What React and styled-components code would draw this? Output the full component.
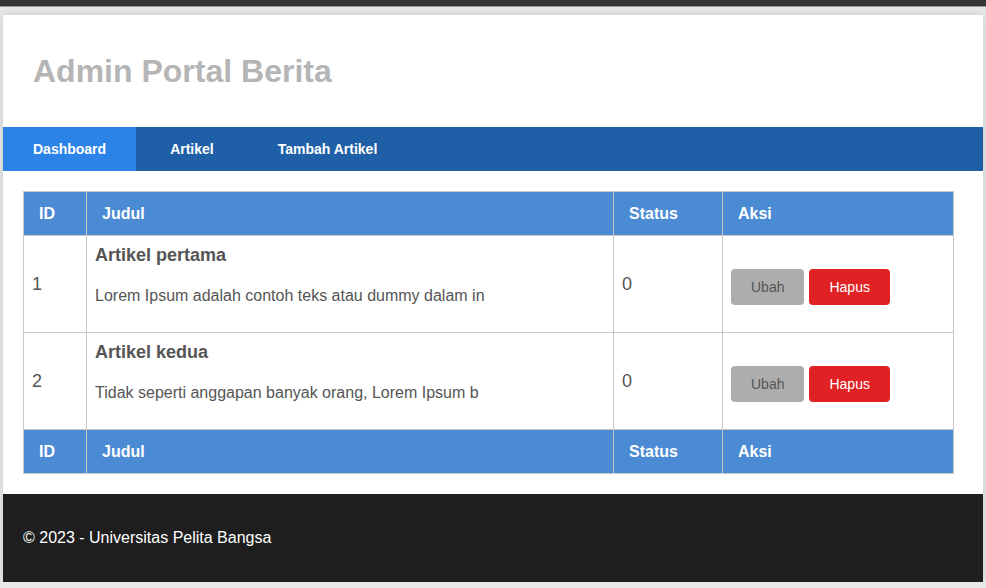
import React from "react";
import styled, { createGlobalStyle } from "styled-components";

const Global = createGlobalStyle`
  html, body { margin: 0; padding: 0; }
  body {
    background: #e9e9e9;
    font-family: "Liberation Sans", Arial, sans-serif;
    color: #555;
  }
`;

const TopBar = styled.div`
  height: 6px;
  background: #363636;
  border-bottom: 1px solid #9a9a9a;
`;

const Container = styled.div`
  width: 980px;
  margin: 8px auto 0;
  background: #fff;
  box-shadow: 0 0 10px rgba(0, 0, 0, 0.15);
`;

const Header = styled.header`
  height: 112px;
  display: flex;
  align-items: center;
  padding: 0 30px;
`;

const Title = styled.h1`
  margin: 0;
  font-size: 32px;
  font-weight: bold;
  color: #b5b5b5;
`;

const Nav = styled.nav`
  display: flex;
  gap: 4px;
  height: 44px;
  background: #1f5fa7;
`;

const NavLink = styled.a`
  display: flex;
  align-items: center;
  padding: 0 30px;
  font-size: 14px;
  font-weight: bold;
  color: #fff;
  text-decoration: none;
  background: ${(p) => (p.$active ? "#2b83e8" : "transparent")};
`;

const Content = styled.main`
  padding: 20px;
`;

const Table = styled.table`
  width: 931px;
  border-collapse: collapse;
`;

const Th = styled.th`
  background: #4b8bd4;
  color: #fff;
  font-size: 16px;
  font-weight: bold;
  text-align: left;
  height: 44px;
  padding: 0 15px;
  border: 1px solid #c8c8c8;
  width: ${(p) => p.$w || "auto"};
  box-sizing: border-box;
`;

const Td = styled.td`
  border: 1px solid #c8c8c8;
  padding: 8px;
  vertical-align: middle;
  font-size: ${(p) => p.$size || "16px"};
  color: #555;
  height: 80px;
`;

const ArticleTitle = styled.h3`
  margin: 0 0 21px;
  font-size: 18px;
  line-height: 21px;
  font-weight: bold;
  color: #555;
`;

const ArticleText = styled.p`
  margin: 0 0 19px;
  font-size: 16px;
  line-height: 18px;
  color: #555;
`;

const Actions = styled.div`
  display: flex;
  gap: 5px;
  padding-top: 5px;
`;

const Button = styled.button`
  font-family: "Liberation Sans", Arial, sans-serif;
  font-size: 14px;
  line-height: 16px;
  height: 36px;
  padding: 0 20px;
  border: none;
  border-radius: 4px;
  cursor: pointer;
  background: ${(p) => (p.$danger ? "#e02225" : "#adadad")};
  color: ${(p) => (p.$danger ? "#fff" : "#555")};
`;

const Footer = styled.footer`
  background: #1e1e1e;
  color: #fff;
  font-size: 16px;
  line-height: 18px;
  padding: 35px 20px;
`;

const rows = [
  {
    id: 1,
    title: "Artikel pertama",
    text: "Lorem Ipsum adalah contoh teks atau dummy dalam in",
    status: 0,
  },
  {
    id: 2,
    title: "Artikel kedua",
    text: "Tidak seperti anggapan banyak orang, Lorem Ipsum b",
    status: 0,
  },
];

const HeadRow = () => (
  <tr>
    <Th $w="63px">ID</Th>
    <Th $w="527px">Judul</Th>
    <Th $w="109px">Status</Th>
    <Th>Aksi</Th>
  </tr>
);

export default function App() {
  return (
    <>
      <Global />
      <TopBar />
      <Container>
        <Header>
          <Title>Admin Portal Berita</Title>
        </Header>
        <Nav>
          <NavLink $active href="#">Dashboard</NavLink>
          <NavLink href="#">Artikel</NavLink>
          <NavLink href="#">Tambah Artikel</NavLink>
        </Nav>
        <Content>
          <Table>
            <thead>
              <HeadRow />
            </thead>
            <tbody>
              {rows.map((r) => (
                <tr key={r.id}>
                  <Td $size="18px">{r.id}</Td>
                  <Td>
                    <ArticleTitle>{r.title}</ArticleTitle>
                    <ArticleText>{r.text}</ArticleText>
                  </Td>
                  <Td $size="18px">{r.status}</Td>
                  <Td>
                    <Actions>
                      <Button>Ubah</Button>
                      <Button $danger>Hapus</Button>
                    </Actions>
                  </Td>
                </tr>
              ))}
            </tbody>
            <tfoot>
              <HeadRow />
            </tfoot>
          </Table>
        </Content>
        <Footer>© 2023 - Universitas Pelita Bangsa</Footer>
      </Container>
    </>
  );
}
